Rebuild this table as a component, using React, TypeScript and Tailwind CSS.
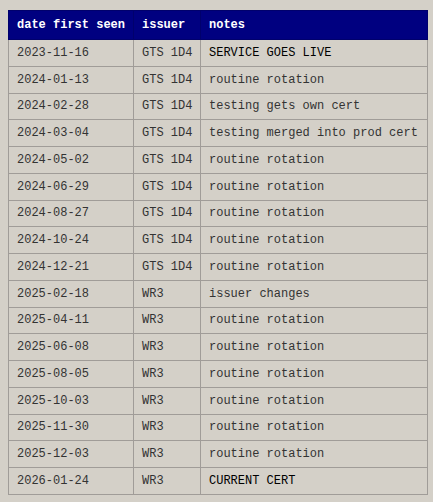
const rows: [string, string, string, boolean?][] = [
  ["2023-11-16", "GTS 1D4", "SERVICE GOES LIVE", true],
  ["2024-01-13", "GTS 1D4", "routine rotation"],
  ["2024-02-28", "GTS 1D4", "testing gets own cert"],
  ["2024-03-04", "GTS 1D4", "testing merged into prod cert"],
  ["2024-05-02", "GTS 1D4", "routine rotation"],
  ["2024-06-29", "GTS 1D4", "routine rotation"],
  ["2024-08-27", "GTS 1D4", "routine rotation"],
  ["2024-10-24", "GTS 1D4", "routine rotation"],
  ["2024-12-21", "GTS 1D4", "routine rotation"],
  ["2025-02-18", "WR3", "issuer changes"],
  ["2025-04-11", "WR3", "routine rotation"],
  ["2025-06-08", "WR3", "routine rotation"],
  ["2025-08-05", "WR3", "routine rotation"],
  ["2025-10-03", "WR3", "routine rotation"],
  ["2025-11-30", "WR3", "routine rotation"],
  ["2025-12-03", "WR3", "routine rotation"],
  ["2026-01-24", "WR3", "CURRENT CERT", true],
];

export default function App() {
  return (
    <div
      className="min-h-[502px] bg-[#d4d0c8] pl-2 pt-[10px] text-[12px] leading-[14px] text-[#333]"
      style={{ fontFamily: '"Liberation Mono", "Courier New", monospace' }}
    >
      <table className="w-[419px] table-fixed border-collapse whitespace-nowrap">
        <colgroup>
          <col className="w-[125px]" />
          <col className="w-[67px]" />
          <col className="w-[227px]" />
        </colgroup>
        <thead>
          <tr className="h-[29px] bg-[#000080] text-white">
            <th className="border border-[#00006c] px-2 py-0 text-left font-bold">date first seen</th>
            <th className="border border-[#00006c] px-2 py-0 text-left font-bold">issuer</th>
            <th className="border border-[#00006c] px-2 py-0 text-left font-bold">notes</th>
          </tr>
        </thead>
        <tbody>
          {rows.map(([date, issuer, note, hi]) => (
            <tr key={date} className="h-[26.75px]">
              <td className="border border-[#a09c98] px-2 py-0">{date}</td>
              <td className="border border-[#a09c98] px-2 py-0">{issuer}</td>
              <td className={`border border-[#a09c98] px-2 py-0 ${hi ? "text-black" : ""}`}>{note}</td>
            </tr>
          ))}
        </tbody>
      </table>
    </div>
  );
}
